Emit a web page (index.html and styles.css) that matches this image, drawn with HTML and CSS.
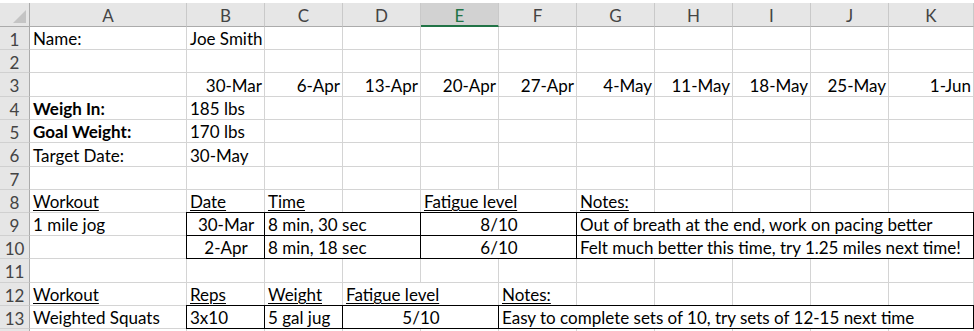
FILE: index.html
```html
<!DOCTYPE html>
<html lang="en">
<head>
<meta charset="utf-8">
<title>Workout Tracker</title>
<link rel="stylesheet" href="styles.css">
</head>
<body>
<div class="sheet">
  <!-- column headers -->
  <div class="corner"><span class="select-all"></span></div>
  <div class="ch">A</div><div class="ch">B</div><div class="ch">C</div><div class="ch">D</div>
  <div class="ch sel">E</div><div class="ch">F</div><div class="ch">G</div><div class="ch">H</div>
  <div class="ch">I</div><div class="ch">J</div><div class="ch">K</div>

  <!-- 1 -->
  <div class="rh">1</div>
  <div class="c">Name:</div><div class="c">Joe Smith</div>
  <div class="c"></div><div class="c"></div><div class="c"></div><div class="c"></div><div class="c"></div><div class="c"></div><div class="c"></div><div class="c"></div><div class="c"></div>

  <!-- 2 -->
  <div class="rh">2</div>
  <div class="c"></div><div class="c"></div><div class="c"></div><div class="c"></div><div class="c"></div><div class="c"></div><div class="c"></div><div class="c"></div><div class="c"></div><div class="c"></div><div class="c"></div>

  <!-- 3: weekly dates -->
  <div class="rh">3</div>
  <div class="c"></div>
  <div class="c r">30-Mar</div><div class="c r">6-Apr</div><div class="c r">13-Apr</div><div class="c r">20-Apr</div><div class="c r">27-Apr</div>
  <div class="c r">4-May</div><div class="c r">11-May</div><div class="c r">18-May</div><div class="c r">25-May</div><div class="c r">1-Jun</div>

  <!-- 4 -->
  <div class="rh">4</div>
  <div class="c b">Weigh In:</div><div class="c">185 lbs</div>
  <div class="c"></div><div class="c"></div><div class="c"></div><div class="c"></div><div class="c"></div><div class="c"></div><div class="c"></div><div class="c"></div><div class="c"></div>

  <!-- 5 -->
  <div class="rh">5</div>
  <div class="c b">Goal Weight:</div><div class="c">170 lbs</div>
  <div class="c"></div><div class="c"></div><div class="c"></div><div class="c"></div><div class="c"></div><div class="c"></div><div class="c"></div><div class="c"></div><div class="c"></div>

  <!-- 6 -->
  <div class="rh">6</div>
  <div class="c">Target Date:</div><div class="c">30-May</div>
  <div class="c"></div><div class="c"></div><div class="c"></div><div class="c"></div><div class="c"></div><div class="c"></div><div class="c"></div><div class="c"></div><div class="c"></div>

  <!-- 7 -->
  <div class="rh">7</div>
  <div class="c"></div><div class="c"></div><div class="c"></div><div class="c"></div><div class="c"></div><div class="c"></div><div class="c"></div><div class="c"></div><div class="c"></div><div class="c"></div><div class="c"></div>

  <!-- 8: jog log headings -->
  <div class="rh">8</div>
  <div class="c"><u>Workout</u></div><div class="c"><u>Date</u></div><div class="c"><u>Time</u></div><div class="c"></div>
  <div class="c span2"><u>Fatigue level</u></div><div class="c"><u>Notes:</u></div>
  <div class="c"></div><div class="c"></div><div class="c"></div><div class="c"></div>

  <!-- 9 -->
  <div class="rh">9</div>
  <div class="c">1 mile jog</div>
  <div class="c box m">30-Mar</div>
  <div class="c box span2">8 min, 30 sec</div>
  <div class="c box span2 m">8/10</div>
  <div class="c box span5">Out of breath at the end, work on pacing better</div>

  <!-- 10 -->
  <div class="rh">10</div>
  <div class="c"></div>
  <div class="c box m">2-Apr</div>
  <div class="c box span2">8 min, 18 sec</div>
  <div class="c box span2 m">6/10</div>
  <div class="c box span5">Felt much better this time, try 1.25 miles next time!</div>

  <!-- 11 -->
  <div class="rh">11</div>
  <div class="c"></div><div class="c"></div><div class="c"></div><div class="c"></div><div class="c"></div><div class="c"></div><div class="c"></div><div class="c"></div><div class="c"></div><div class="c"></div><div class="c"></div>

  <!-- 12: squat log headings -->
  <div class="rh">12</div>
  <div class="c"><u>Workout</u></div><div class="c"><u>Reps</u></div><div class="c"><u>Weight</u></div>
  <div class="c span2"><u>Fatigue level</u></div><div class="c"><u>Notes:</u></div>
  <div class="c"></div><div class="c"></div><div class="c"></div><div class="c"></div><div class="c"></div>

  <!-- 13 -->
  <div class="rh">13</div>
  <div class="c">Weighted Squats</div>
  <div class="c box">3x10</div>
  <div class="c box">5 gal jug</div>
  <div class="c box span2 m">5/10</div>
  <div class="c box span6">Easy to complete sets of 10, try sets of 12-15 next time</div>

  <!-- next row, only its top edge shows -->
  <div class="rh"></div>
  <div class="c"></div><div class="c"></div><div class="c"></div><div class="c"></div><div class="c"></div><div class="c"></div><div class="c"></div><div class="c"></div><div class="c"></div><div class="c"></div><div class="c"></div>
</div>
</body>
</html>
```

FILE: styles.css
```css
* {
  box-sizing: border-box;
}

html,
body {
  margin: 0;
  height: 331px;
  overflow: hidden;
  background: #ffffff;
}

body {
  font-family: Lato, "Liberation Sans", sans-serif;
  font-size: 17px;
  color: #000000;
}

.sheet {
  display: grid;
  grid-template-columns: 30px 157px repeat(9, 78px) 1fr;
  grid-template-rows: 24px 23px 23px 24px 23px 23px 24px 23px 23px 23px 23px 24px 23px 23px 23px;
  padding-top: 3px;
}

/* header strip */
.corner,
.ch,
.rh {
  background: #e6e6e6;
  color: #444444;
  display: flex;
  align-items: center;
  justify-content: center;
  line-height: 17px;
}

.corner {
  border-right: 1px solid #ababab;
  border-bottom: 1px solid #ababab;
  align-items: flex-end;
  justify-content: flex-end;
}

.select-all {
  width: 0;
  height: 0;
  border-left: 13px solid transparent;
  border-bottom: 13px solid #c4c4c4;
  margin: 0 3px 3px 0;
}

.ch {
  border-right: 1px solid #c9c9c9;
  border-bottom: 1px solid #ababab;
  padding-top: 2px;
}

.ch.sel {
  background: #d2d2d2;
  color: #217346;
  border-bottom: 2px solid #217346;
}

.rh {
  border-right: 1px solid #ababab;
  border-bottom: 1px solid #d0d0d0;
  padding-top: 2px;
}

/* worksheet cells */
.c {
  display: flex;
  align-items: flex-end;
  padding: 0 2px 2px 3px;
  line-height: 17px;
  white-space: nowrap;
  border-right: 1px solid #d4d4d4;
  border-bottom: 1px solid #d4d4d4;
}

.r {
  justify-content: flex-end;
}

.m {
  justify-content: center;
}

.b {
  font-weight: 700;
}

u {
  text-decoration-thickness: 1px;
  text-underline-offset: 2px;
}

.span2 {
  grid-column: span 2;
}

.span5 {
  grid-column: span 5;
}

.span6 {
  grid-column: span 6;
}

/* thin black outline around logged entries */
.box {
  position: relative;
  border-color: #000000;
}

.box::after {
  content: "";
  position: absolute;
  top: -1px;
  left: -1px;
  right: -1px;
  bottom: -1px;
  border: 1px solid #000000;
  pointer-events: none;
}
```
